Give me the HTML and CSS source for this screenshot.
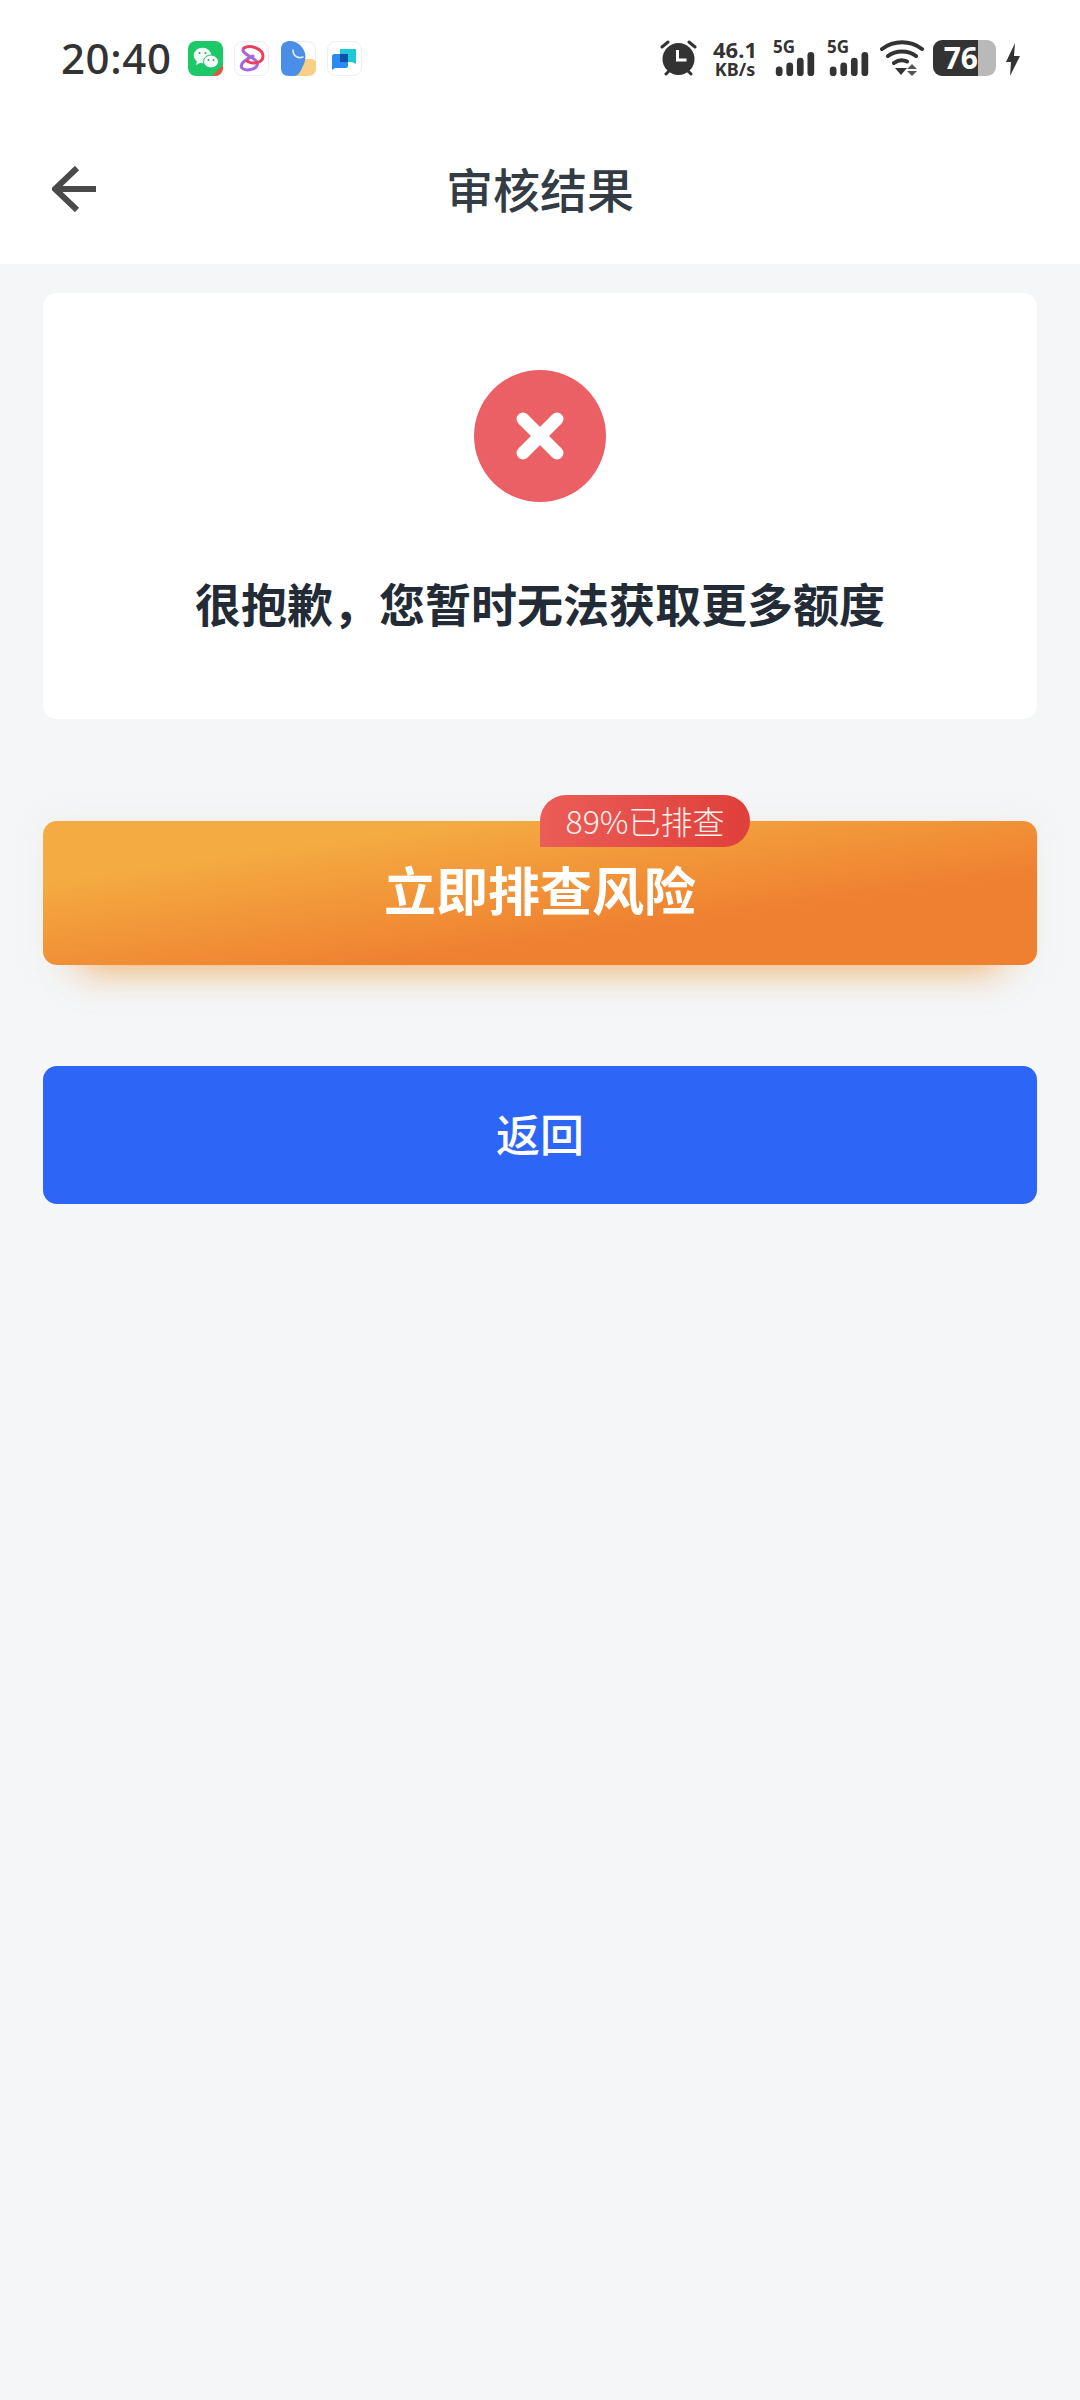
FILE: index.html
```html
<!DOCTYPE html>
<html>
<head>
  <title>审核结果</title>
  <meta name="viewport" content="width=device-width, initial-scale=1.0">
  <link rel="stylesheet" href="styles.css">
</head>
<body>
  <header class="top">
    <div class="status-bar">
      <div class="status-left">
        <span class="time">20:40</span>
        <div class="app-icons">
          <svg class="app-icon" viewBox="0 0 35 35">
            <rect width="35" height="35" rx="8" fill="#1dc868"/>
            <ellipse cx="14.500" cy="14.500" rx="8.800" ry="7.800" fill="#f2fbf5"/>
            <path d="M9 20l-1 4 5-2.500z" fill="#f2fbf5"/>
            <ellipse cx="23" cy="20.500" rx="7.500" ry="6.500" fill="#f2fbf5" stroke="#1dc868" stroke-width="1"/>
            <circle cx="11.500" cy="12" r="1" fill="#5b8a6c"/>
            <circle cx="17.500" cy="12" r="1" fill="#5b8a6c"/>
            <circle cx="20.500" cy="19" r="0.900" fill="#5b8a6c"/>
            <circle cx="25.500" cy="19" r="0.900" fill="#5b8a6c"/>
            <path d="M24 35L35 24v3a8 8 0 0 1-8 8z" fill="#e8553f"/>
          </svg>
          <svg class="app-icon" viewBox="0 0 35 35">
            <rect x="0.500" y="0.500" width="34" height="34" rx="8" fill="#fff" stroke="#eceef1"/>
            <path d="M10 7C5 12 20 16 23 21c3 7-11 10-15 6-3-4 4-9 11-12" fill="none" stroke="#a767dc" stroke-width="3" stroke-linecap="round"/>
            <path d="M10 7c6-4 19 1 19 8 0 7-10 9-16 5" fill="none" stroke="#ec3f5c" stroke-width="3" stroke-linecap="round"/>
          </svg>
          <svg class="app-icon" viewBox="0 0 35 35">
            <rect x="0.500" y="0.500" width="34" height="34" rx="8" fill="#fff" stroke="#eceef1"/>
            <path d="M35 27v-6c-2-4-10-4-13-1-2 4-4 10-7 15h12c5 0 8-3 8-8z" fill="#f7cf85"/>
            <path d="M0 8C0 2 5 0 9 0c7 0 13 5 15 12 1 5 0 9-2 13-2 4-4 10-9 10H8c-5 0-8-3-8-8z" fill="#4a8ee8"/>
            <path d="M12 9c0 6 5 9 10 7" fill="none" stroke="#e4f0fc" stroke-width="1.600" stroke-linecap="round"/>
          </svg>
          <svg class="app-icon" viewBox="0 0 35 35">
            <rect x="0.500" y="0.500" width="34" height="34" rx="8" fill="#fff" stroke="#eceef1"/>
            <path d="M13 8h16v15l-4-2H13z" fill="#1cc9d6"/>
            <path d="M5 15c0-1 1-2 2-2h12c1 0 2 1 2 2v10c0 1-1 2-2 2H8l-3 2z" fill="#2a8cf3"/>
            <path d="M13 13h8v8h-8z" fill="#0f4fa8"/>
          </svg>
        </div>
      </div>
      <div class="status-right">
        <svg class="alarm" viewBox="0 0 37 36">
          <circle cx="18.500" cy="19" r="16" fill="#333"/>
          <path d="M2 7l6-5M35 7l-6-5M6 34l3-3M31 34l-3-3" stroke="#333" stroke-width="3" stroke-linecap="round"/>
          <path d="M17.500 10v10h9" fill="none" stroke="#fff" stroke-width="3"/>
        </svg>
        <div class="speed">
          <span class="speed-num">46.1</span>
          <span class="speed-unit">KB/s</span>
        </div>
        <div class="signal">
          <span class="signal-label">5G</span>
          <svg class="signal-bars" viewBox="0 0 40 25">
            <rect x="0" y="15" width="7" height="10" rx="3.500" fill="#333"/>
            <rect x="11" y="11" width="7" height="14" rx="3.500" fill="#333"/>
            <rect x="22" y="6" width="7" height="19" rx="3.500" fill="#333"/>
            <rect x="33" y="0" width="7" height="25" rx="3.500" fill="#333"/>
          </svg>
        </div>
        <div class="signal">
          <span class="signal-label">5G</span>
          <svg class="signal-bars" viewBox="0 0 40 25">
            <rect x="0" y="15" width="7" height="10" rx="3.500" fill="#333"/>
            <rect x="11" y="11" width="7" height="14" rx="3.500" fill="#333"/>
            <rect x="22" y="6" width="7" height="19" rx="3.500" fill="#333"/>
            <rect x="33" y="0" width="7" height="25" rx="3.500" fill="#333"/>
          </svg>
        </div>
        <svg class="wifi" viewBox="0 0 44 36">
          <path d="M2 9c12-9 28-9 40 0M8 16c8-6 20-6 28 0M14 23c4-3 9-3.500 13-1.500" fill="none" stroke="#333" stroke-width="4" stroke-linecap="round"/>
          <path d="M15 28h12l-6 7z" fill="#333"/>
          <path d="M32 24l5 5h-10zM32 36l-5-5h10z" fill="#555"/>
        </svg>
        <div class="battery">
          <div class="battery-level">76</div>
          <div class="battery-rest"></div>
        </div>
        <svg class="bolt" viewBox="0 0 14 33">
          <path d="M9 0L0 19h5l-1 14 10-20H8z" fill="#333"/>
        </svg>
      </div>
    </div>
    <nav class="nav-bar">
      <svg class="back" viewBox="0 0 44 46">
        <path d="M25 2L3 23l22 21M3 23h41" fill="none" stroke="#4a4a4a" stroke-width="6"/>
      </svg>
      <h1>审核结果</h1>
    </nav>
  </header>

  <main class="content">
    <section class="result-card">
      <div class="fail-icon">
        <svg viewBox="0 0 48 48">
          <path d="M7 7l34 34M41 7L7 41" stroke="#fff" stroke-width="13" stroke-linecap="round"/>
        </svg>
      </div>
      <h2>很抱歉，您暂时无法获取更多额度</h2>
    </section>

    <button type="button" class="btn btn-check">
      <span class="badge">89%已排查</span>
      立即排查风险
    </button>
    <button type="button" class="btn btn-back">返回</button>
  </main>
</body>
</html>
```

FILE: styles.css
```css
* {
  box-sizing: border-box;
}

body {
  margin: 0;
  min-height: 2400px;
  background-color: #f4f6f8;
  font-family: "Noto Sans CJK SC", "Noto Sans", sans-serif;
}

.top {
  background: #fff;
  height: 264px;
}

.status-bar {
  height: 114px;
  padding: 40px 60px 0 61px;
  display: flex;
  justify-content: space-between;
  align-items: flex-start;
}

.status-left {
  display: flex;
  align-items: center;
  height: 36px;
}

.time {
  font-family: "Noto Sans", sans-serif;
  font-size: 42px;
  font-weight: 500;
  color: #333;
  line-height: 36px;
  letter-spacing: 0.600px;
}

.app-icons {
  display: flex;
  gap: 11.500px;
  margin-left: 16px;
}

.app-icon {
  width: 35px;
  height: 35px;
}

.status-right {
  display: flex;
  align-items: flex-start;
  height: 36px;
}

.alarm {
  width: 37px;
  height: 36px;
}

.speed {
  margin-left: 15px;
  width: 46px;
  display: flex;
  flex-direction: column;
  align-items: center;
  font-family: "Noto Sans", sans-serif;
  font-weight: 700;
  color: #333;
}

.speed-num {
  font-size: 22px;
  line-height: 18px;
}

.speed-unit {
  font-size: 18px;
  line-height: 18px;
  margin-top: 2px;
}

.signal {
  margin-left: 15px;
  width: 42px;
  display: flex;
  flex-direction: column;
  font-family: "Noto Sans", sans-serif;
  font-weight: 700;
  color: #333;
}

.signal + .signal {
  margin-left: 12px;
}

.signal-label {
  font-size: 17px;
  line-height: 14px;
  height: 12px;
}

.signal-bars {
  width: 40px;
  height: 24px;
  margin-left: 2px;
}

.wifi {
  width: 44px;
  height: 36px;
  margin-left: 11px;
}

.battery {
  display: flex;
  margin-left: 9px;
  width: 63px;
  height: 36px;
}

.battery-level {
  width: 45px;
  background: #333;
  color: #fff;
  border-radius: 9px 0 0 9px;
  font-family: "Noto Sans", sans-serif;
  font-size: 30px;
  font-weight: 700;
  line-height: 36px;
  text-align: right;
}

.battery-rest {
  width: 18px;
  background: #b9b9b9;
  border-radius: 0 9px 9px 0;
}

.bolt {
  width: 14px;
  height: 33px;
  margin-left: 10px;
  margin-top: 3px;
}

.nav-bar {
  display: grid;
  grid-template-columns: 1fr auto 1fr;
  align-items: center;
  height: 150px;
  padding: 0 52px;
}

.back {
  width: 44px;
  height: 46px;
}

h1 {
  grid-column: 2;
  margin: -3px 0 0 0;
  font-size: 47px;
  font-weight: 500;
  color: #333b44;
}

.content {
  padding: 29px 43px 0 43px;
}

.result-card {
  height: 426px;
  background: #fff;
  border-radius: 14px;
  display: flex;
  flex-direction: column;
  align-items: center;
  padding-top: 77px;
}

.fail-icon {
  width: 132px;
  height: 132px;
  border-radius: 50%;
  background: #ea6065;
  display: flex;
  align-items: center;
  justify-content: center;
}

.fail-icon svg {
  width: 48px;
  height: 48px;
}

h2 {
  margin: 70px 0 0 0;
  font-size: 46px;
  font-weight: 700;
  line-height: 60px;
  color: #222b36;
}

.btn {
  display: block;
  width: 100%;
  border: none;
  border-radius: 14px;
  color: #fff;
  font-family: inherit;
  cursor: pointer;
}

.btn-check {
  position: relative;
  height: 144px;
  margin-top: 102px;
  padding-bottom: 11px;
  background: linear-gradient(172deg, #f4ac42 20%, #ef8030 68%);
  font-size: 52px;
  font-weight: 700;
  box-shadow: 0 44px 36px -38px rgba(240, 150, 50, 0.65), 0 0 34px rgba(220, 190, 150, 0.14);
}

.badge {
  position: absolute;
  left: 497px;
  top: -26px;
  height: 52px;
  width: 210px;
  background: linear-gradient(90deg, #eb5d58, #e03f3a);
  border-radius: 26px 26px 26px 0;
  color: #fff1ee;
  font-size: 32px;
  font-weight: 300;
  line-height: 50px;
}

.btn-back {
  height: 138px;
  margin-top: 101px;
  padding-bottom: 6px;
  background: #2d66f6;
  font-size: 44px;
  font-weight: 500;
}
```
